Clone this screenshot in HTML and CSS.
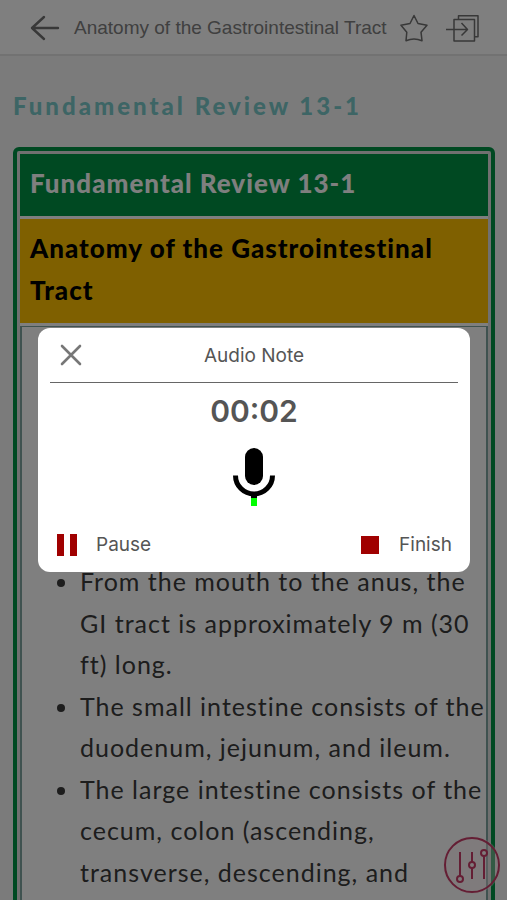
FILE: index.html
```html
<!DOCTYPE html>
<html lang="en">
<head>
<meta charset="utf-8">
<meta name="viewport" content="width=device-width, initial-scale=1">
<title>Anatomy of the Gastrointestinal Tract</title>
<link rel="stylesheet" href="styles.css">
</head>
<body>
<div class="screen">
  <header class="topbar">
    <button class="icon-button back" aria-label="Back">
      <svg width="30" height="28" viewBox="0 0 30 28"><path d="M14 3 2 14l12 11M2 14h26" fill="none" stroke="currentColor" stroke-width="2.4" stroke-linecap="round" stroke-linejoin="round"/></svg>
    </button>
    <h1 class="topbar-title">Anatomy of the Gastrointestinal Tract</h1>
    <button class="icon-button star" aria-label="Favorite">
      <svg width="28" height="28" viewBox="0 0 28 28"><path d="M14 1.500l4 8 9 1.700-6 7 1 8.500q-4-1.800-8-1.800t-8 1.800l.8-8.500-5.800-7 9-1.700z" fill="none" stroke="currentColor" stroke-width="1.500" stroke-linejoin="round"/></svg>
    </button>
    <button class="icon-button" aria-label="Open in section">
      <svg width="34" height="28" viewBox="0 0 34 28"><g fill="none" stroke="currentColor" stroke-width="1.500" stroke-linejoin="round"><path d="M9 5.500h20.500V27H9z"/><path d="M13.500 5.500V1.700H33v21h-3.500"/><path d="M1 15.500h21M16.500 9l6 6.500-6 6"/></g></svg>
    </button>
  </header>
  <main class="content">
    <h2 class="section-title">Fundamental Review 13-1</h2>
    <article class="review">
      <h3 class="review-label">Fundamental Review 13-1</h3>
      <h4 class="review-title">Anatomy of the Gastrointestinal Tract</h4>
      <div class="review-body">
        <ul class="facts">
          <li>From the mouth to the anus, the GI tract is approximately 9 m (30 ft) long.</li>
          <li>The small intestine consists of the duodenum, jejunum, and ileum.</li>
          <li>The large intestine consists of the cecum, colon (ascending, transverse, descending, and</li>
        </ul>
      </div>
    </article>
  </main>
  <button class="settings" aria-label="Display settings">
    <svg width="58" height="58" viewBox="0 0 58 58"><g fill="none" stroke="currentColor" stroke-width="2"><circle cx="29" cy="29" r="27"/><path d="M17 16v24M29 16v10M29 32v11M41 20v23"/><circle cx="17" cy="43" r="3"/><circle cx="29" cy="29" r="3"/><circle cx="41" cy="17" r="3"/></g></svg>
  </button>
</div>
<div class="overlay">
  <section class="dialog" role="dialog" aria-labelledby="dialog-title">
    <header class="dialog-head">
      <button class="icon-button" aria-label="Close">
        <svg width="22" height="22" viewBox="0 0 22 22"><path d="M2 2l18 18M20 2 2 20" fill="none" stroke="currentColor" stroke-width="2.600" stroke-linecap="round"/></svg>
      </button>
      <h2 class="dialog-title" id="dialog-title">Audio Note</h2>
    </header>
    <div class="timer">00:02</div>
    <svg class="mic" width="44" height="60" viewBox="0 0 44 60"><rect x="13" y="1" width="18" height="37" rx="9"/><path d="M3.500 28.500a18.500 18.500 0 0 0 37 0" fill="none" stroke="#000" stroke-width="5"/><path d="M19 47h6v5h-6z"/><path class="mic-level" d="M19 51h6v8h-6z"/></svg>
    <footer class="dialog-actions">
      <button class="action">
        <svg width="20" height="22" viewBox="0 0 20 22"><path d="M0 0h7v22H0zM13 0h7v22h-7z" fill="#a00000"/></svg>
        Pause
      </button>
      <button class="action">
        <svg width="20" height="20" viewBox="0 0 20 20"><path d="M1 1h18v18H1z" fill="#a00000"/></svg>
        Finish
      </button>
    </footer>
  </section>
</div>
</body>
</html>
```
FILE: styles.css
```css
* { box-sizing: border-box; }

body {
  margin: 0;
  background: #f7f7f7;
  font-family: Lato, "Liberation Sans", sans-serif;
}

h1, h2, h3, h4 { margin: 0; }

button {
  border: 0;
  padding: 0;
  background: none;
  font: inherit;
  color: inherit;
}

svg { display: block; }

.screen {
  height: 100vh;
  overflow: hidden;
}

.topbar {
  display: flex;
  align-items: center;
  height: 56px;
  padding: 2px 28px 0 30px;
  background: #fff;
  border-bottom: 2px solid #e4e4e4;
  color: #707070;
}

.back { margin-right: 14px; }
.star { margin-right: 17px; }

.topbar-title {
  flex: 1;
  font: 400 19px "Liberation Sans", sans-serif;
  white-space: nowrap;
  color: #808080;
}

.content { padding: 32px 12px 0 13px; }

.section-title {
  margin-bottom: 23px;
  font-size: 24px;
  font-weight: 900;
  line-height: 36px;
  letter-spacing: 3px;
  color: #7bcaca;
}

.review {
  display: flex;
  flex-direction: column;
  gap: 3px;
  padding: 3px;
  border: 4px solid #009245;
  border-radius: 6px;
  background: #fff;
  box-shadow: inset 0 0 0 3px #e0e0e0;
}

.review-label,
.review-title {
  padding: 8px 10px 12px;
  font-size: 26px;
  font-weight: 900;
  line-height: 42px;
  letter-spacing: 1px;
}

.review-label {
  background: #009245;
  color: #fff;
}

.review-title {
  background: #ffc000;
  color: #000;
}

.review-body {
  padding: 234px 0 24px 18px;
  border: 1px solid #7fa5a0;
  border-width: 1px 2px;
  background: #fff;
}

.facts {
  margin: 0;
  padding-left: 40px;
  font-size: 25px;
  line-height: 1.66;
  letter-spacing: 1px;
  color: #3a3a3a;
}

.settings {
  position: fixed;
  right: 6px;
  bottom: 6px;
  border-radius: 50%;
  background: rgba(255, 235, 240, 0.4);
  color: #c83c68;
}

.overlay {
  position: fixed;
  inset: 0;
  display: flex;
  align-items: center;
  justify-content: center;
  padding: 0 37px 0 38px;
  background: rgba(0, 0, 0, 0.5);
}

.dialog {
  display: flex;
  flex-direction: column;
  align-items: center;
  width: 100%;
  padding: 0 12px 15px;
  border-radius: 12px;
  background: #fff;
  font-family: Inter, sans-serif;
  color: #555;
}

.dialog-head {
  display: grid;
  grid-template-columns: 22px 1fr 22px;
  align-items: center;
  align-self: stretch;
  height: 55px;
  padding: 0 10px;
  border-bottom: 1px solid #666;
  color: #777;
}

.dialog-title {
  font-size: 19px;
  font-weight: 400;
  text-align: center;
  color: #555;
}

.timer {
  margin-top: 10px;
  font-size: 30px;
  font-weight: 600;
  line-height: 36px;
}

.mic { margin-top: 18px; }
.mic-level { fill: #0f0; }

.dialog-actions {
  display: flex;
  justify-content: space-between;
  align-self: stretch;
  margin-top: 26px;
  padding: 0 6px 0 7px;
}

.action {
  display: flex;
  align-items: center;
  gap: 19px;
  font-size: 19px;
  line-height: 24px;
}
```
